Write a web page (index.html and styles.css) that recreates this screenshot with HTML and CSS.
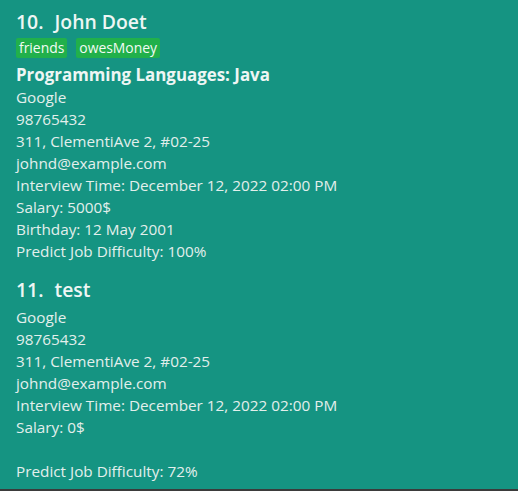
FILE: index.html
```html
<!DOCTYPE html>
<html>
<head>
<meta charset="utf-8">
<link rel="stylesheet" href="styles.css">
</head>
<body>
<div class="list">
  <div class="card first">
    <div class="header"><span class="idx">10.</span><span class="name">John Doet</span></div>
    <div class="tags"><span class="tag">friends</span><span class="tag">owesMoney</span></div>
    <div class="lang">Programming Languages: Java</div>
    <div class="line">Google</div>
    <div class="line">98765432</div>
    <div class="line">311, ClementiAve 2, #02-25</div>
    <div class="line">johnd@example.com</div>
    <div class="line">Interview Time: December 12, 2022 02:00 PM</div>
    <div class="line">Salary: 5000$</div>
    <div class="line">Birthday: 12 May 2001</div>
    <div class="line">Predict Job Difficulty: 100%</div>
  </div>
  <div class="card">
    <div class="header tight"><span class="idx">11.</span><span class="name">test</span></div>
    <div class="line">Google</div>
    <div class="line">98765432</div>
    <div class="line">311, ClementiAve 2, #02-25</div>
    <div class="line">johnd@example.com</div>
    <div class="line">Interview Time: December 12, 2022 02:00 PM</div>
    <div class="line">Salary: 0$</div>
    <div class="line"></div>
    <div class="line">Predict Job Difficulty: 72%</div>
  </div>
</div>
</body>
</html>
```

FILE: styles.css
```css
html, body {
  margin: 0;
  padding: 0;
  background: #3b3b3b;
}
body {
  width: 518px;
  height: 491px;
  overflow: hidden;
  font-family: "Open Sans", "Noto Sans", sans-serif;
  color: #e3efec;
}
.list {
  background: #159482;
  height: 489px;
}
.card {
  padding: 9px 16px 8px 16px;
}
.card.first {
  padding-bottom: 6px;
}
.header {
  display: flex;
  gap: 11px;
  font-size: 19.4px;
  font-weight: 600;
  line-height: 26px;
  color: #eef6f4;
}
.header.tight {
  margin-bottom: 3px;
}
.tags {
  display: flex;
  gap: 9px;
  margin-top: 3px;
}
.tag {
  background: #21b04b;
  color: #f2fbf4;
  font-size: 13.9px;
  line-height: 20px;
  padding: 0 3px;
  border-radius: 2px;
}
.lang {
  margin-top: 6px;
  font-size: 16.9px;
  font-weight: 700;
  line-height: 22px;
  color: #eef6f4;
}
.line {
  font-size: 15.3px;
  line-height: 22px;
  height: 22px;
  white-space: nowrap;
}
```
